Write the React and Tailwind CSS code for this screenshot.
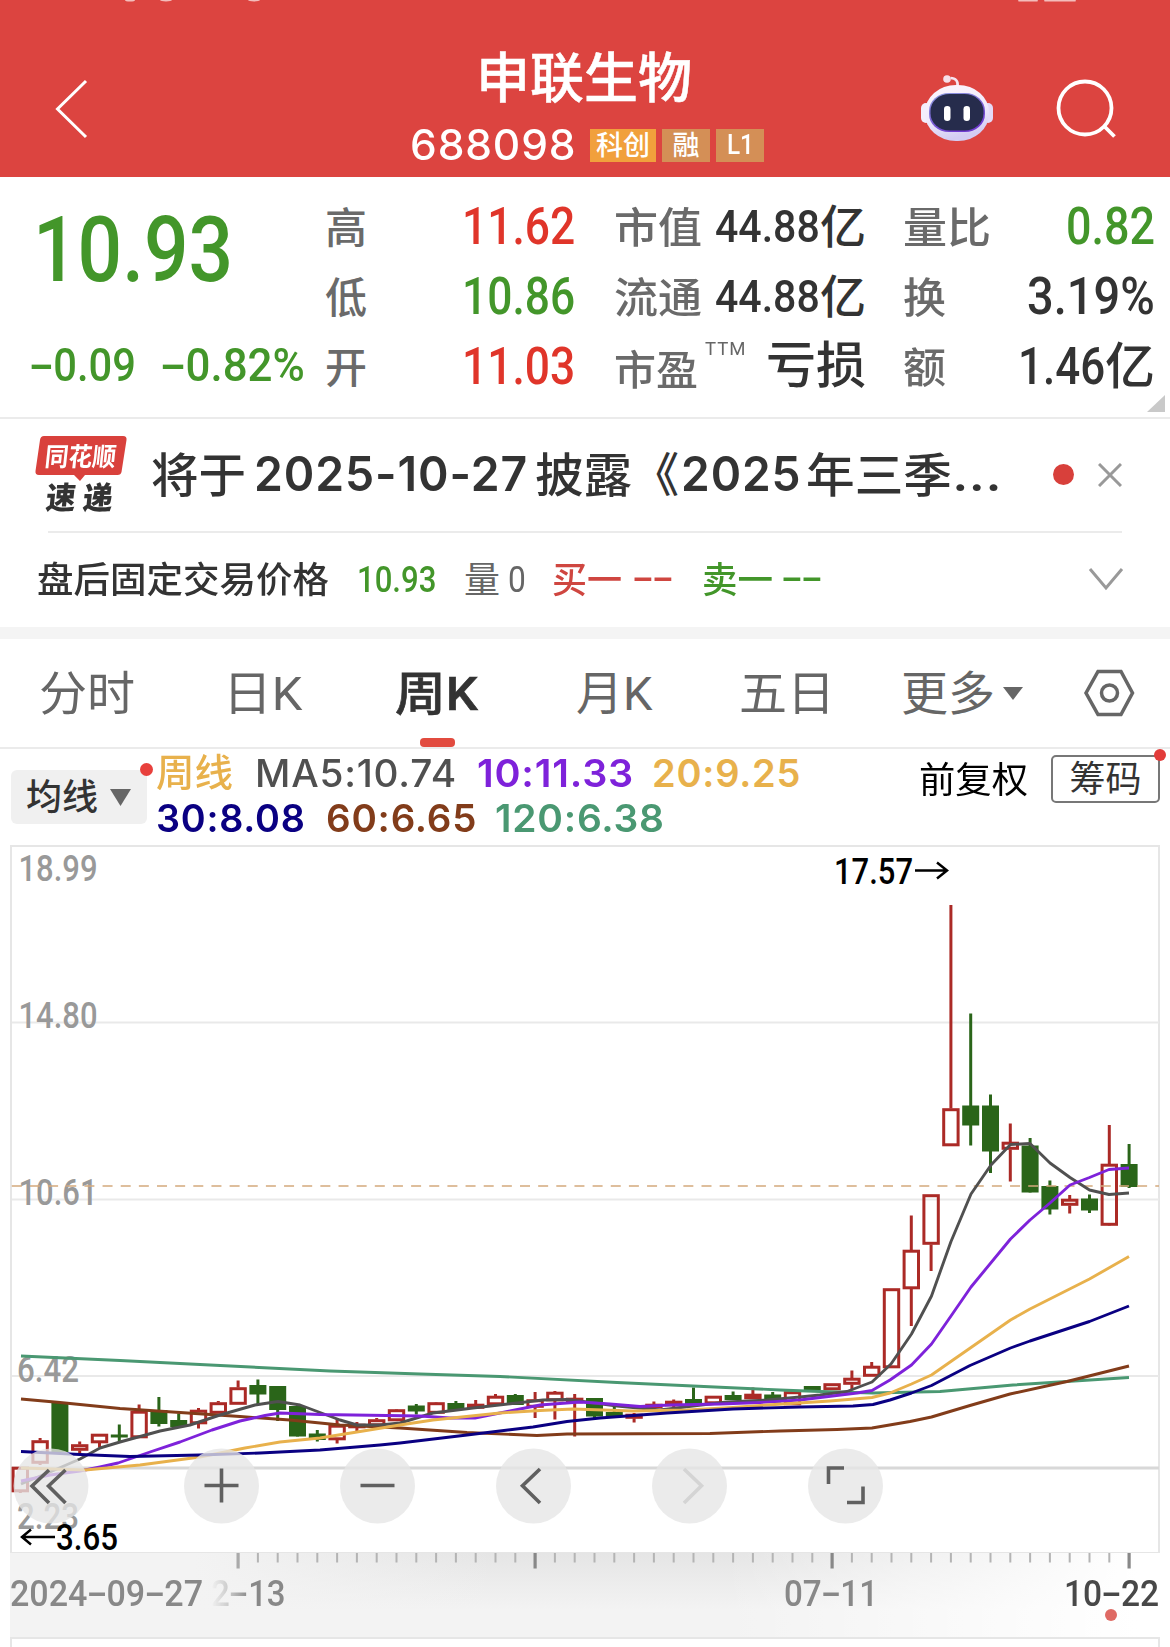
import React, { useLayoutEffect, useRef } from "react";

// Stretches or squeezes its text horizontally so that it fills the width given by its classes.
function Fit({ className = "", children }) {
  const outer = useRef(null);
  const inner = useRef(null);
  useLayoutEffect(() => {
    const scale = outer.current.clientWidth / inner.current.offsetWidth;
    inner.current.style.transform = `scaleX(${scale})`;
  }, []);
  return (
    <span ref={outer} className={`block shrink-0 whitespace-nowrap leading-none ${className}`}>
      <span ref={inner} className="inline-block origin-left whitespace-pre">{children}</span>
    </span>
  );
}

function Wide() {
  return <span className="inline-block w-[0.56em] text-center"><span className="inline-block scale-x-[1.8]">-</span></span>;
}

function Num({ className, value }) {
  const parts = value.split("-");
  return (
    <Fit className={className}>
      {parts.map((p, i) => (
        <React.Fragment key={i}>{i > 0 && <Wide />}{p}</React.Fragment>
      ))}
    </Fit>
  );
}

const GREEN = "text-[#43962a]";
const RED = "text-[#e0352a]";

function Header() {
  return (
    <header className="relative h-[177px] overflow-hidden bg-[#dc4440] text-white">
      <svg className="absolute left-0 top-0" width="1170" height="3" fill="#f3bdbb">
        <ellipse cx="130" cy="0" rx="5" ry="1.500" /><ellipse cx="166" cy="0" rx="6" ry="1.500" /><ellipse cx="254" cy="0" rx="6" ry="1.500" />
        <rect x="1018" width="20" height="1.500" rx="1" /><rect x="1044" width="32" height="1.500" rx="1" />
      </svg>
      <div className="flex h-full items-start">
        <svg className="ml-[50px] mt-[74px]" width="44" height="70" fill="none" stroke="#fff" strokeWidth="3">
          <path d="M36 7 7.500 35 36 63" />
        </svg>
        <div className="ml-[314px] mt-[53px] w-[358px]">
          <Fit className="ml-[68px] w-[216px] text-[54px] font-medium [-webkit-text-stroke:0.5px_white]">申联生物</Fit>
          <div className="mt-[17px] flex items-center">
            <Fit className="ml-[2px] w-[166px] font-['Inter'] text-[42px] font-medium tracking-[0.02em]">688098</Fit>
            <div className="ml-[14px] flex h-[33px] w-[66px] items-center justify-center bg-[#f1a03c]"><Fit className="w-[54px] pt-[2px] text-[27px] font-medium">科创</Fit></div>
            <div className="ml-[6px] flex h-[33px] w-[48px] items-center justify-center bg-[#d48f56]"><Fit className="w-[27px] pt-[2px] text-[27px] font-medium">融</Fit></div>
            <div className="ml-[6px] flex h-[33px] w-[48px] items-center justify-center bg-[#d48f56]"><Fit className="w-[27px] text-[27px] font-medium">L1</Fit></div>
          </div>
        </div>
        <svg className="ml-[152px] mt-[72px]" width="78" height="72" viewBox="918 72 78 72">
          <defs>
            <linearGradient id="shell" x1="0" y1="0" x2="0.300" y2="1"><stop offset="0" stopColor="#fdf6fc" /><stop offset=".6" stopColor="#f0eafc" /><stop offset="1" stopColor="#d3ccf3" /></linearGradient>
            <linearGradient id="rim" x1="0" y1="0" x2="0.500" y2="1"><stop offset="0" stopColor="#8f9fe0" /><stop offset="1" stopColor="#6f3ad0" /></linearGradient>
          </defs>
          <path d="M957.500 87c1-6-2-9-7-9" fill="none" stroke="#f6e4f0" strokeWidth="2.600" />
          <circle cx="947" cy="79" r="3.800" fill="#f6dfe9" />
          <rect x="921" y="103" width="10" height="20" rx="5" fill="#f3eefc" /><rect x="983" y="103" width="10" height="20" rx="5" fill="#e4daf8" />
          <rect x="925" y="85" width="64" height="56" rx="31" ry="27" fill="url(#shell)" />
          <rect x="929" y="93" width="56" height="39" rx="20" ry="18" fill="url(#rim)" />
          <rect x="930.500" y="94" width="53" height="36.500" rx="19" ry="17" fill="#262c4c" />
          <rect x="944" y="106" width="6.500" height="15" rx="3.200" fill="#fff" /><rect x="963.500" y="106" width="6.500" height="15" rx="3.200" fill="#fff" />
        </svg>
        <svg className="ml-[56px] mt-[74px]" width="70" height="70" viewBox="1052 74 70 70" fill="none" stroke="#fff" strokeWidth="3.800">
          <circle cx="1085" cy="108" r="26.500" /><path d="m1104 126 10.500 10.500" />
        </svg>
      </div>
    </header>
  );
}

function Stat({ label, labelClass, children, valueClass = "" }) {
  return (
    <div className="flex h-[70px] items-center justify-between">
      <Fit className={`pt-[8px] text-[42px] font-medium text-[#6a6a6a] ${labelClass}`}>{label}</Fit>
      <div className={`flex items-center pt-[3px] font-medium ${valueClass}`}>{children}</div>
    </div>
  );
}

function Quote() {
  return (
    <section className="relative flex h-[242px] border-b-2 border-[#ebebeb] pt-[13px] text-[#333]">
      <div className={`w-[325px] ${GREEN}`}>
        <Num className="ml-[33px] mt-[15px] w-[200px] text-[91px] font-medium" value="10.93" />
        <div className="ml-[30px] mt-[46px] flex">
          <Num className="w-[106px] text-[46px] font-medium" value="-0.09" />
          <Num className="ml-[25px] w-[144px] text-[46px] font-medium" value="-0.82%" />
        </div>
      </div>
      <div className="w-[250px]">
        <Stat label="高" labelClass="w-[42px]" valueClass={RED}><Num className="w-[113px] text-[51px]" value="11.62" /></Stat>
        <Stat label="低" labelClass="w-[42px]" valueClass={GREEN}><Num className="w-[113px] text-[51px]" value="10.86" /></Stat>
        <Stat label="开" labelClass="w-[42px]" valueClass={RED}><Num className="w-[113px] text-[51px]" value="11.03" /></Stat>
      </div>
      <div className="ml-[39px] w-[252px]">
        <Stat label="市值" labelClass="w-[88px]"><Num className="w-[105px] text-[45px]" value="44.88" /><Fit className="w-[46px] text-[46px]">亿</Fit></Stat>
        <Stat label="流通" labelClass="w-[88px]"><Num className="w-[105px] text-[45px]" value="44.88" /><Fit className="w-[46px] text-[46px]">亿</Fit></Stat>
        <div className="flex h-[70px] items-center">
          <Fit className="w-[84px] pt-[13px] text-[41px] font-medium text-[#6a6a6a]">市盈</Fit>
          <Fit className="mb-[33px] ml-[7px] w-[41px] text-[19px] tracking-[1px] text-[#666]">TTM</Fit>
          <Fit className="ml-[20px] w-[100px] pt-px text-[50px] font-medium">亏损</Fit>
        </div>
      </div>
      <div className="ml-[37px] w-[252px]">
        <Stat label="量比" labelClass="w-[88px]" valueClass={GREEN}><Num className="w-[89px] text-[51px]" value="0.82" /></Stat>
        <Stat label="换" labelClass="w-[43px]"><Num className="w-[128px] text-[51px]" value="3.19%" /></Stat>
        <Stat label="额" labelClass="w-[43px]"><Num className="w-[87px] text-[51px]" value="1.46" /><Fit className="w-[50px] text-[50px]">亿</Fit></Stat>
      </div>
      <svg className="absolute bottom-[5px] right-[5px]" width="18" height="17" fill="#c9c9c9"><path d="M18 0v17H0z" /></svg>
    </section>
  );
}

function News() {
  return (
    <section className="text-[#333]">
      <div className="flex h-[112px] items-center pb-px">
        <div className="relative ml-[35px] h-[77px] w-[93px]">
          <svg className="absolute left-0 top-0" width="93" height="48" fill="#d9413c"><path d="M9 0h79q4 0 3.500 4l-5 32q-.6 3-4 3H50l-5 6-6-6H4q-4 0-3.500-4L5 4q.6-4 4-4z" /></svg>
          <Fit className="absolute left-[10px] top-[8px] w-[71px] -skew-x-6 text-[26px] font-bold text-white">同花顺</Fit>
          <Fit className="absolute left-[11px] top-[47px] w-[67px] -skew-x-6 text-[31px] font-black">速 递</Fit>
        </div>
        <div className="-mt-[2px] ml-[23px] flex items-center text-[47px] font-medium">
          <Fit className="w-[95px] pt-[4px]">将于</Fit>
          <Fit className="ml-[8px] w-[274px] font-['Inter'] text-[48px] font-semibold tracking-[0.02em]">2025-10-27</Fit>
          <Fit className="ml-[7px] w-[97px] pt-[4px]">披露</Fit>
          <Fit className="w-[47px] pt-[4px]">《</Fit>
          <Fit className="ml-[2px] w-[121px] font-['Inter'] text-[48px] font-semibold tracking-[0.02em]">2025</Fit>
          <Fit className="ml-[4px] w-[146px] pt-[4px]">年三季</Fit>
          <Fit className="w-[50px] font-['Inter']">...</Fit>
        </div>
        <div className="ml-[51px] size-[21px] rounded-full bg-[#d8403b]" />
        <svg className="ml-[24px]" width="24" height="24" stroke="#999" strokeWidth="3"><path d="m1 1 22 22M23 1 1 23" /></svg>
      </div>
      <div className="ml-[48px] w-[1074px] border-t-2 border-[#ebebeb]" />
      <div className="flex h-[94px] items-center pb-[2px] text-[36px]">
        <Fit className="ml-[37px] w-[292px] pt-[4px] text-[36px] font-medium">盘后固定交易价格</Fit>
        <Num className={`ml-[28px] w-[79px] text-[37px] font-medium ${GREEN}`} value="10.93" />
        <Fit className="ml-[28px] w-[36px] pt-[4px] text-[#666]">量</Fit>
        <Num className="ml-[8px] w-[18px] text-[37px] text-[#666]" value="0" />
        <Fit className="ml-[26px] w-[70px] pt-[4px] font-medium text-[#cf4640]">买一</Fit>
        <Num className="ml-[11px] w-[40px] font-medium text-[#cf4640]" value="--" />
        <Fit className={`ml-[29px] w-[71px] pt-[4px] font-medium ${GREEN}`}>卖一</Fit>
        <Num className={`ml-[9px] w-[40px] font-medium ${GREEN}`} value="--" />
        <svg className="ml-[266px]" width="36" height="24" fill="none" stroke="#999" strokeWidth="3"><path d="m2 2 16 19L34 2" /></svg>
      </div>
      <div className="h-[12px] bg-[#f4f4f4]" />
    </section>
  );
}

function Tabs() {
  return (
    <nav className="relative flex h-[110px] items-center border-b-2 border-[#ebebeb] text-[47px] text-[#666]">
      <Fit className="ml-[39px] w-[96px]">分时</Fit>
      <Fit className="ml-[88px] w-[80px]">日K</Fit>
      <Fit className="ml-[92px] w-[83px] font-medium text-[#333] [-webkit-text-stroke:0.6px_#333]">周K</Fit>
      <Fit className="ml-[98px] w-[77px]">月K</Fit>
      <Fit className="ml-[86px] w-[96px]">五日</Fit>
      <Fit className="ml-[66px] w-[94px]">更多</Fit>
      <svg className="ml-[8px]" width="20" height="13" fill="#666"><path d="M0 0h20L10 13z" /></svg>
      <svg className="ml-[60px]" width="54" height="50" fill="none" stroke="#666" strokeWidth="3.500"><path d="M15 3.500h23L49.500 25 38 46.500H15L3 25z" /><circle cx="26.500" cy="25" r="8" /></svg>
      <div className="absolute bottom-0 left-[420px] h-[9px] w-[35px] rounded-[4px] bg-[#e24b3f]" />
    </nav>
  );
}

function Legend() {
  return (
    <section className="flex h-[95px]">
      <div className="relative ml-[11px] mt-[21px] flex h-[54px] w-[136px] items-center rounded-[6px] bg-[#f0f0f0] text-[#333]">
        <Fit className="ml-[15px] w-[72px] pt-[2px] text-[36px] font-medium">均线</Fit>
        <svg className="ml-[12px]" width="21" height="17" fill="#666"><path d="M0 0h21L10.500 17z" /></svg>
        <div className="absolute -right-[6px] -top-[7px] size-[13px] rounded-full bg-[#e8403c]" />
      </div>
      <div className="ml-[9px] w-[760px] pt-[4px] text-[38px] font-semibold">
        <div className="flex h-[40px] items-center font-['Inter']">
          <Fit className="w-[77px] font-[Roboto,'Noto_Sans_CJK_SC'] font-medium text-[#e8b14c]">周线</Fit>
          <Fit className="ml-[22px] w-[202px] font-medium tracking-[0.02em] text-[#505050]">MA5:10.74</Fit>
          <Fit className="ml-[20px] w-[157px] tracking-[0.02em] text-[#7e22da]">10:11.33</Fit>
          <Fit className="ml-[18px] w-[149px] tracking-[0.02em] text-[#e8b14c]">20:9.25</Fit>
        </div>
        <div className="mt-[4px] flex h-[42px] items-center font-['Inter']">
          <Fit className="w-[150px] tracking-[0.02em] text-[#0a0082]">30:8.08</Fit>
          <Fit className="ml-[20px] w-[151px] tracking-[0.02em] text-[#823c1a]">60:6.65</Fit>
          <Fit className="ml-[18px] w-[170px] tracking-[0.02em] text-[#4a9872]">120:6.38</Fit>
        </div>
      </div>
      <Fit className="ml-[3px] mt-[14px] w-[109px] text-[36px] text-black">前复权</Fit>
      <div className="relative ml-[23px] mt-[6px] flex h-[48px] w-[109px] items-center justify-center rounded-[5px] border-2 border-[#777] text-[#333]">
        <Fit className="w-[72px] pt-[2px] text-[36px]">筹码</Fit>
        <div className="absolute -right-[8px] -top-[8px] size-[12px] rounded-full bg-[#e23c3a]" />
      </div>
    </section>
  );
}

// Each candle: [rising, body top, body bottom, wick top, wick bottom]
const CANDLES = [
  [1, 1467, 1492, 1467, 1493], [1, 1440.5, 1463.5, 1438, 1465], [0, 1403, 1452, 1403, 1452], [1, 1444.5, 1450.5, 1441.5, 1454],
  [1, 1434, 1443, 1434, 1447.5], [0, 1434.5, 1437.5, 1424.5, 1441.5], [1, 1411, 1438, 1404.5, 1438], [0, 1410, 1424, 1397, 1426.5],
  [0, 1420, 1427, 1413.5, 1427], [1, 1410, 1424, 1408, 1428.5], [1, 1402.5, 1413.5, 1401, 1413.5], [1, 1387.5, 1404.5, 1380.5, 1404.5],
  [0, 1385, 1394.5, 1379.5, 1404.5], [0, 1386, 1410, 1386, 1421], [0, 1406, 1436.5, 1406, 1436.5], [0, 1433.5, 1440, 1430, 1441.5],
  [1, 1425, 1440, 1418.5, 1443.5], [1, 1424, 1428, 1422, 1431], [1, 1419.5, 1426, 1418, 1426], [1, 1409.5, 1421, 1409, 1421],
  [0, 1405.5, 1411.5, 1404, 1414.5], [1, 1402.5, 1413.5, 1402, 1413.5], [0, 1403, 1410, 1401, 1410], [1, 1404, 1408.5, 1400, 1409],
  [1, 1396, 1405, 1394, 1405], [0, 1395, 1405, 1394, 1405], [1, 1399.5, 1407.5, 1392, 1418], [1, 1392, 1401, 1391, 1419.5],
  [1, 1398, 1403, 1394, 1436.5], [0, 1398, 1416.5, 1398, 1419], [0, 1412, 1416, 1406, 1416], [1, 1414, 1418.5, 1413, 1422.5],
  [1, 1404, 1408, 1401.5, 1409], [1, 1401, 1406, 1399.5, 1408], [0, 1399, 1404, 1387.5, 1404], [1, 1396, 1404, 1396, 1404],
  [0, 1395, 1400, 1391.5, 1400], [1, 1394, 1399, 1387.5, 1399], [0, 1394.5, 1402.5, 1392, 1403], [1, 1391.5, 1405, 1389.5, 1405],
  [0, 1386, 1391, 1386, 1391], [1, 1383.5, 1390, 1383.5, 1390], [1, 1378, 1384.5, 1370.5, 1390], [1, 1366, 1376.5, 1362, 1376.5],
  [1, 1288.5, 1368, 1288.5, 1368], [1, 1250, 1289, 1215.5, 1326], [1, 1194.5, 1244.5, 1194.5, 1271], [1, 1108.5, 1146, 905, 1146],
  [0, 1105.5, 1125.5, 1013.5, 1145.5], [0, 1105.5, 1151.5, 1094.5, 1173], [1, 1142, 1149.5, 1123.5, 1181.5], [0, 1145.5, 1192.5, 1138, 1192.5],
  [0, 1186, 1209.5, 1180.5, 1214.5], [1, 1199, 1205.5, 1195, 1213.5], [0, 1198.5, 1210.5, 1194.5, 1213], [1, 1164, 1225.5, 1125, 1226],
  [0, 1164, 1187, 1144, 1188],
];

const LINES = [
  ["#4a9872", "21,1356 120,1360.5 210,1365 330,1371 420,1374 500,1376.5 617,1382.5 693,1386 780,1390 820,1391.5 873,1393 940,1391.5 1013,1385 1129,1377.5"],
  ["#823c1a", "21,1399 60,1402.5 120,1408.5 240,1416.5 290,1420 340,1425 400,1428 467,1432.5 537,1435.5 567,1434 710,1433.5 780,1431 837,1429.5 872,1428 910,1421.5 931.5,1417 970,1405.5 1010,1394 1067,1381.5 1129,1366"],
  ["#505050", "21,1484 50,1472 80,1459 100,1448 120,1442 160,1431 190,1425 220,1415 255,1405 278,1401.5 300,1405 340,1420 357,1425 380,1425 400,1423 433,1413 473,1408 517,1403 543,1400 567,1399.5 587,1402 617,1406 660,1410 693,1406 727,1402 767,1400 800,1397 820,1395 847,1391.5 872,1382 891,1364 911.5,1334 931.5,1296 951,1241.5 971,1194 991,1165 1010.5,1144.5 1030,1143.5 1050,1163 1070,1177.5 1089.5,1190 1109,1194.5 1129,1193"],
  ["#7e22da", "21,1481 50,1475 80,1471 100,1467 118,1463 150,1452 180,1442 212,1430 240,1421 265,1415.5 280,1413 320,1414.5 420,1416 450,1418 475,1418 510,1411 540,1405 580,1402 610,1404 640,1406.5 670,1405 720,1404 760,1402.5 800,1400 857,1393 872,1390.5 890,1380 911.5,1365 931.5,1344 951,1316 971,1287 1010.5,1239 1030,1220 1050,1203 1070,1185 1089.5,1177.5 1109,1169.5 1129,1168"],
  ["#e8b14c", "21,1468 85,1470 140,1465 200,1457 245,1448 280,1442 320,1438 360,1431.5 400,1425 433,1420 500,1413 540,1410.5 573,1409 633,1411 687,1410 733,1407.5 767,1405 830,1401 872,1397.5 890,1393 911.5,1384 931.5,1375 953,1360 971,1347.5 1010.5,1320 1030,1309 1089.5,1279 1129,1256.5"],
  ["#0a0082", "21,1451.5 80,1454.5 130,1456.5 200,1455 260,1453 320,1450 380,1445 400,1443 467,1435 533,1427 567,1421.5 600,1418 667,1413 733,1409 800,1407 853,1406 873,1404.5 890,1400 911.5,1393 931.5,1385.5 970,1365.5 1010.5,1348 1030,1341 1089.5,1321.5 1129,1306"],
];

const BUTTONS = [
  [51, "M49 1470 32 1486l17 17M65.500 1470l-17 16 17 17", "#606060"],
  [221.5, "M204.500 1485.500h34M221.500 1468.500v34", "#606060"],
  [377.5, "M360.500 1485.500h34", "#606060"],
  [533.5, "M540 1469l-17.500 16.800L540 1503", "#606060"],
  [689.5, "M684 1469l17.500 16.800L684 1503", "#d4d4d4"],
  [845.5, "M844 1468h-15.500v16M847 1502.500h16v-16", "#606060"],
];

const x = (i) => 20.3 + 19.8 * i;
const isMajor = (i) => i % 15 === 11;

function Label({ at, y, w, fill = "#999", weight = 500, size = 36, children }) {
  return <text x={at} y={y} textLength={w} lengthAdjust="spacingAndGlyphs" fill={fill} fontWeight={weight} fontSize={size}>{children}</text>;
}

function Chart() {
  return (
    <svg className="relative block overflow-visible" width="1170" height="709" viewBox="0 844 1170 709" fontFamily="Roboto, sans-serif">
      <rect x="11" y="846" width="1148" height="707" fill="#fff" stroke="#e6e6e6" strokeWidth="2" />
      <path d="M12 1022.500h1147M12 1199.500h1147M12 1376h1147" stroke="#e9e9e9" strokeWidth="2" />
      <path d="M12 1468h1147" stroke="#d8d8d8" strokeWidth="3" />
      <Label at="18.500" y="880.500" w="79">18.99</Label>
      <Label at="18.500" y="1027.500" w="79">14.80</Label>
      <Label at="18.500" y="1204.500" w="79">10.61</Label>
      <Label at="17" y="1382" w="62">6.42</Label>
      <Label at="17" y="1528.500" w="62">2.23</Label>
      {CANDLES.map(([up, top, bottom, high, low], i) =>
        up ? (
          <g key={i} fill="none" stroke="#ab2a26" strokeWidth="3">
            <path d={`M${x(i)} ${high}V${top}M${x(i)} ${bottom}V${low}`} />
            <rect x={x(i) - 7.2} y={top + 1.2} width="14.400" height={Math.max(bottom - top - 2.4, 1)} />
          </g>
        ) : (
          <g key={i} fill="#2a6519">
            <rect x={x(i) - 1.5} y={high} width="3" height={low - high} />
            <rect x={x(i) - 8.5} y={top} width="17" height={bottom - top} />
          </g>
        )
      )}
      <path d="M11 1186h1148" stroke="#d4a97c" strokeWidth="1.700" strokeDasharray="10 8.150" strokeDashoffset="-.8" />
      {LINES.map(([color, points]) => (
        <polyline key={color} points={points} fill="none" stroke={color} strokeWidth="2.900" strokeLinejoin="round" />
      ))}
      {BUTTONS.map(([cx, d, color]) => (
        <g key={cx}>
          <circle cx={cx} cy="1486" r="37.500" fill="#e6e6e6" fillOpacity=".78" />
          <path d={d} fill="none" stroke={color} strokeWidth="3.600" />
        </g>
      ))}
      <Label at="834" y="883.500" w="79" fill="#000">17.57</Label>
      <path d="M915 870.500h32M937 862.500l10 8-10 8" fill="none" stroke="#000" strokeWidth="2.500" />
      <Label at="56" y="1549.500" w="62" fill="#000">3.65</Label>
      <path d="M55 1537H22M31 1529.500l-9 7.500 9 7.500" fill="none" stroke="#000" strokeWidth="2.500" />
    </svg>
  );
}

function TimeAxis() {
  return (
    <section>
      <div className="relative ml-[10px] h-[84px] w-[1150px] bg-[#f3f3f3] bg-[linear-gradient(to_right,transparent_62%,#fff_98%),linear-gradient(to_right,#f3f3f3_16%,transparent_42%),linear-gradient(to_bottom,#e5e5e5,transparent_68%)] text-[36px] text-[#888]">
        <svg className="block" width="1150" height="16" viewBox="10 0 1150 16">
          {CANDLES.map((_, i) => i > 10 && (
            <rect key={i} x={x(i) - (isMajor(i) ? 1.6 : 1)} y="0" width={isMajor(i) ? 3.2 : 2} height={isMajor(i) ? 15.5 : 9.5} fill={i === 11 ? "#aaa" : isMajor(i) ? "#888" : "#b4b4b4"} />
          ))}
        </svg>
        <div className="mt-[7px] flex items-center font-medium">
          <Num className="w-[193px]" value="2024-09-27" />
          <Num className="ml-[8px] w-[75px] [mask-image:linear-gradient(to_right,transparent,rgba(0,0,0,.35)_22%,#000_50%)]" value="2-13" />
          <Num className="ml-[498px] w-[94px]" value="07-11" />
          <Num className="ml-[186px] w-[95px] text-[#484848]" value="10-22" />
        </div>
        <div className="absolute left-[1095px] top-[56px] size-[12px] rounded-full bg-[#df6a64]" />
      </div>
      <div className="ml-[10px] h-[12px] w-[1150px] border-2 border-b-0 border-[#e6e6e6]" />
    </section>
  );
}

export default function App() {
  return (
    <main className="h-[1647px] w-[1170px] overflow-hidden bg-white font-[Roboto,'Noto_Sans_CJK_SC',sans-serif]">
      <Header />
      <Quote />
      <News />
      <Tabs />
      <Legend />
      <Chart />
      <TimeAxis />
    </main>
  );
}
